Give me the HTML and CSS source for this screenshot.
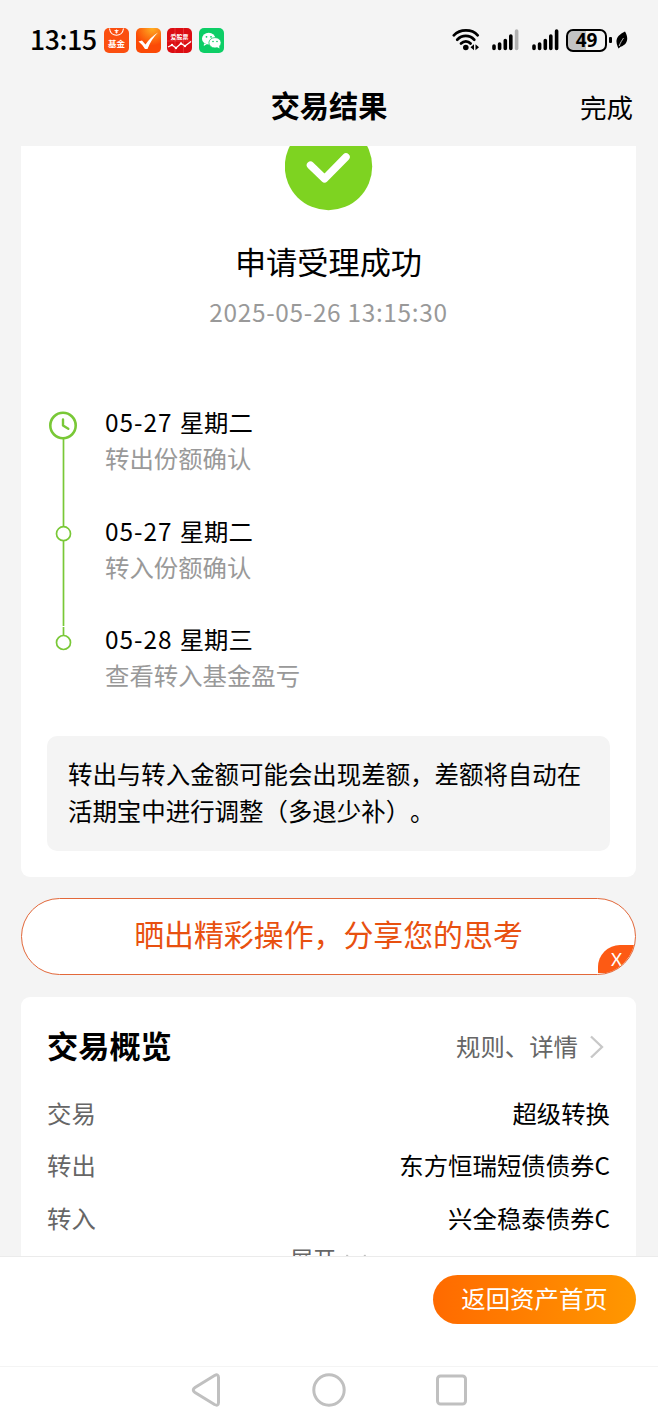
FILE: index.html
```
<!DOCTYPE html>
<html lang="zh-CN">
<head>
  <meta charset="UTF-8">
  <meta name="viewport" content="width=device-width, initial-scale=1.0">
  <title>交易结果</title>
  <link rel="stylesheet" href="styles.css">
</head>
<body>
  <!-- Status bar -->
  <div class="status-bar">
    <span class="clock">13:15</span>
    <div class="app-icons">
      <svg width="25" height="25" viewBox="0 0 25 25">
        <rect width="25" height="25" rx="5" fill="#fb4f10"/>
        <path d="M5.500 0.500C6.500 9.500 18.500 9.500 19.500 0.500" fill="none" stroke="#fff" stroke-width="1.100"/>
        <path d="M10.500 2.500h4M12.500 1.500v4M11 4h3" stroke="#fff" stroke-width="0.900"/>
        <text class="fund-text" x="12.500" y="18.800">基金</text>
      </svg>
      <svg width="25" height="25" viewBox="0 0 25 25">
        <defs>
          <radialGradient id="sun" cx="0.65" cy="0" r="0.7">
            <stop offset="0" stop-color="#ffb022"/>
            <stop offset="1" stop-color="#fb4a06"/>
          </radialGradient>
        </defs>
        <rect width="25" height="25" rx="5" fill="url(#sun)"/>
        <path d="M2.500 13.500L6 12.500L9.500 16.500Q14 9.500 22 4.500Q15 11.500 11.500 21L9 21Q6.500 16.500 2.500 13.500Z" fill="#fff"/>
      </svg>
      <svg width="25" height="25" viewBox="0 0 25 25">
        <rect width="25" height="25" rx="5" fill="#dc0d12"/>
        <path d="M8 0v25M16.500 0v25M0 13h25" stroke="#ef5656" stroke-width="0.500"/>
        <text class="stock-text" x="12.500" y="10.500">爱股票</text>
        <path d="M1 19L5 17L9 20L14 15.500L18 18L24 13.500" fill="none" stroke="#fff" stroke-width="1.300"/>
        <g fill="#fff"><circle cx="5" cy="17" r="1.200"/><circle cx="9" cy="20" r="1.200"/><circle cx="14" cy="15.500" r="1.200"/><circle cx="18" cy="18" r="1.200"/></g>
      </svg>
      <svg width="25" height="25" viewBox="0 0 25 25">
        <rect width="25" height="25" rx="5" fill="#0dce66"/>
        <path d="M5 15.500L4.800 18L8 16Z" fill="#fff"/>
        <ellipse cx="9.700" cy="10.700" rx="6.700" ry="5.900" fill="#fff"/>
        <ellipse cx="16" cy="14.800" rx="6.100" ry="5.200" fill="#fff" stroke="#0dce66" stroke-width="0.800"/>
        <path d="M18 19L20.500 20.500L20 17.500Z" fill="#fff"/>
        <g fill="#0dce66"><circle cx="7.500" cy="8.800" r="0.900"/><circle cx="12" cy="8.800" r="0.900"/><circle cx="14" cy="13.500" r="0.800"/><circle cx="18" cy="13.500" r="0.800"/></g>
      </svg>
    </div>
    <div class="device-icons">
      <svg width="28" height="24" viewBox="0 0 28 24">
        <g fill="none" stroke="#000" stroke-width="2.700" stroke-linecap="round">
          <path d="M1.800 7.300C8 0.700 20 0.700 25.700 7.300"/>
          <path d="M5.200 11.700C10 6.700 17.500 6.700 22.300 11.700"/>
          <path d="M9 15.500C11.800 12.600 16 12.600 18.600 15.500"/>
        </g>
        <circle cx="13.800" cy="19.500" r="2.800"/>
        <path d="M22 16.200v6L18.500 19.200ZM23.500 16.200v6L27 19.200Z"/>
      </svg>
      <svg class="signal" width="27" height="22" viewBox="0 0 27 22">
        <g stroke="#000" stroke-width="3.600" stroke-linecap="round">
          <path d="M2 17v2.500M7.600 15v4.500M13.300 11.500v8M18.800 7v12.500"/>
          <path d="M24.600 2v17.500" stroke="#b2b2b2"/>
        </g>
      </svg>
      <svg class="signal" width="27" height="22" viewBox="0 0 27 22">
        <path d="M2 17v2.500M7.600 15v4.500M13.300 11.500v8M18.800 7v12.500M24.600 2v17.500" stroke="#000" stroke-width="3.600" stroke-linecap="round"/>
      </svg>
      <div class="battery">49</div>
      <span class="battery-tip"></span>
      <svg class="leaf" width="12" height="18" viewBox="0 0 12 18">
        <path d="M9 0.500C12.500 6 12.500 13.500 4.500 15.800L2.500 17.500L1.600 15.500C-1.500 8 2 4 9 0.500Z"/>
        <path d="M3.200 15C4.300 11.500 6 9.500 7.500 7" fill="none" stroke="#f4f4f4" stroke-width="0.800"/>
      </svg>
    </div>
  </div>

  <div class="header">
    <h1>交易结果</h1>
    <a class="done">完成</a>
  </div>

  <div class="content">
    <!-- Result card -->
    <div class="result-card">
      <svg class="success-icon" width="88" height="65" viewBox="0 0 88 65">
        <circle cx="43.500" cy="20.500" r="43.700" fill="#7ed321"/>
        <path d="M26 19.700L40 33.300L61.500 11.500" transform="translate(-0.500 -0.500)" fill="none" stroke="#fff" stroke-width="7.500" stroke-linecap="round" stroke-linejoin="round"/>
      </svg>
      <h2 class="result-title">申请受理成功</h2>
      <div class="result-time">2025-05-26 13:15:30</div>

      <div class="timeline">
        <svg class="timeline-track" width="30" height="242" viewBox="0 0 30 242">
          <g fill="none" stroke="#79c837">
            <path d="M16.500 29v87M16.500 131v85M16.500 217v8" stroke-width="1.700"/>
            <circle cx="16" cy="15.500" r="12.700" stroke-width="2.600"/>
            <path d="M16 9.500v6L21.300 18.800" stroke-width="2.400" stroke-linecap="round" stroke-linejoin="round"/>
            <circle cx="16.500" cy="123.700" r="7" stroke-width="1.700"/>
            <circle cx="16.500" cy="232.500" r="7" stroke-width="1.700"/>
          </g>
        </svg>
        <div class="steps">
          <div class="step">
            <div class="step-date"><span class="num">05-27</span>星期二</div>
            <div class="step-text">转出份额确认</div>
          </div>
          <div class="step">
            <div class="step-date"><span class="num">05-27</span>星期二</div>
            <div class="step-text">转入份额确认</div>
          </div>
          <div class="step">
            <div class="step-date"><span class="num">05-28</span>星期三</div>
            <div class="step-text">查看转入基金盈亏</div>
          </div>
        </div>
      </div>

      <div class="notice">转出与转入金额可能会出现差额，差额将自动在<br>活期宝中进行调整（多退少补）。</div>
    </div>

    <!-- Share banner -->
    <div class="share">
      晒出精彩操作，分享您的思考
      <span class="share-close">X</span>
    </div>

    <!-- Overview -->
    <div class="overview">
      <div class="overview-head">
        <h2>交易概览</h2>
        <div class="detail-link">规则、详情
          <svg width="16" height="24" viewBox="0 0 16 24"><path d="M2 2.500L13 13L2 23.500" fill="none" stroke="#c8c8c8" stroke-width="2.300"/></svg>
        </div>
      </div>
      <div class="row"><span class="label">交易</span><span>超级转换</span></div>
      <div class="row"><span class="label">转出</span><span>东方恒瑞短债债券C</span></div>
      <div class="row"><span class="label">转入</span><span>兴全稳泰债券C</span></div>
      <div class="expand">展开
        <svg width="22" height="12" viewBox="0 0 22 12"><path d="M1.500 1L11 10L20.500 1" fill="none" stroke="#bbb" stroke-width="1.500"/></svg>
      </div>
    </div>
  </div>

  <div class="footer">
    <button class="home-button">返回资产首页</button>
  </div>

  <!-- System navigation -->
  <div class="nav-bar">
    <svg width="34" height="36" viewBox="0 0 34 36"><path d="M24.500 3.500Q28.500 1.500 28.500 5.500V30.500Q28.500 34.500 24.500 32.500L5 20.500Q1.500 18 5 15.500Z"/></svg>
    <svg width="34" height="36" viewBox="0 0 34 36"><circle cx="17" cy="18" r="15.200"/></svg>
    <svg width="34" height="36" viewBox="0 0 34 36"><rect x="3.500" y="4" width="28" height="28" rx="3"/></svg>
  </div>
</body>
</html>
```

FILE: styles.css
```
* {
  box-sizing: border-box;
}

body {
  margin: 0;
  height: 1416px;
  display: flex;
  flex-direction: column;
  overflow: hidden;
  background-color: #f4f4f4;
  color: #000;
  font-family: "Noto Sans CJK SC", sans-serif;
  font-size: 24.4px;
  text-spacing-trim: space-all;
}

h1, h2 {
  margin: 0;
}

svg {
  display: block;
  flex: none;
}

/* Status bar */
.status-bar {
  height: 80px;
  padding: 0 30px 0 30px;
  display: flex;
  align-items: center;
}

.clock {
  width: 74px;
  font-size: 26.5px;
  font-weight: 500;
  line-height: 40px;
  padding-bottom: 2px;
  letter-spacing: -0.3px;
  white-space: nowrap;
}

.app-icons {
  display: flex;
  gap: 6.5px;
}

.fund-text, .stock-text {
  fill: #fff;
  text-anchor: middle;
  font-weight: 700;
}

.fund-text {
  font-size: 8.5px;
}

.stock-text {
  font-size: 6px;
}

.device-icons {
  margin-left: auto;
  display: flex;
  align-items: center;
}

.signal {
  margin-left: 12px;
}

.signal + .signal {
  margin-left: 13px;
}

.battery {
  width: 41px;
  height: 23px;
  margin-left: 7px;
  border: 2px solid #000;
  border-radius: 7px;
  background: linear-gradient(to right, #c3c3c3 50%, #f4f4f4 50%);
  font-family: "Noto Sans", sans-serif;
  font-size: 19px;
  font-weight: 700;
  line-height: 19px;
  text-align: center;
}

.battery-tip {
  width: 3px;
  height: 6px;
  margin-left: 2px;
  border-radius: 1px;
  background: #000;
}

.leaf {
  margin-left: 4px;
}

/* Header */
.header {
  position: relative;
  height: 66px;
  padding-top: 4px;
  text-align: center;
}

.header h1 {
  font-size: 29.2px;
  line-height: 41px;
}

.done {
  position: absolute;
  right: 25px;
  top: 6px;
  font-size: 26.5px;
  line-height: 42px;
}

.content {
  height: 1110px;
  padding: 0 22px 0 21px;
  overflow: hidden;
}

/* Result card */
.result-card {
  height: 731px;
  padding: 0 26px;
  border-radius: 0 0 9px 9px;
  background: #fff;
  text-align: center;
}

.success-icon {
  margin: 0 auto;
}

.result-title {
  margin-top: 27px;
  font-size: 31.2px;
  font-weight: 400;
  line-height: 46px;
}

.result-time {
  margin-top: 10px;
  color: #999;
  letter-spacing: 0.68px;
  line-height: 36px;
}

.timeline {
  margin-top: 74px;
  display: flex;
  text-align: left;
}

.timeline-track {
  margin-top: 6px;
}

.steps {
  padding-left: 28px;
}

.step {
  height: 108.6px;
  line-height: 36.2px;
}

.num {
  margin-right: 7px;
  letter-spacing: 1px;
}

.step-text {
  color: #999;
}

.notice {
  height: 115px;
  margin-top: 6px;
  padding: 19px 20px 0 21px;
  border-radius: 10px;
  background: #f4f4f4;
  font-size: 24.45px;
  line-height: 37px;
  text-align: left;
  white-space: nowrap;
}

/* Share banner */
.share {
  position: relative;
  height: 77px;
  margin-top: 21px;
  border: 1px solid #e2683a;
  border-radius: 39px;
  background: #fff;
  color: #e8500f;
  font-size: 29.9px;
  line-height: 69px;
  text-align: center;
  overflow: hidden;
}

.share-close {
  position: absolute;
  right: 0;
  bottom: 1px;
  width: 37px;
  height: 28px;
  border-top-left-radius: 22px;
  background: #fd5a14;
  color: #fff;
  font-family: Lato, sans-serif;
  font-size: 17px;
  line-height: 29px;
}

/* Overview */
.overview {
  height: 300px;
  margin-top: 22px;
  padding: 24px 26px 0;
  border-radius: 9px;
  background: #fff;
}

.overview-head {
  display: flex;
  justify-content: space-between;
  height: 67px;
  line-height: 50px;
}

.overview-head h2 {
  font-size: 31.2px;
  line-height: 48px;
}

.detail-link {
  height: 50px;
  padding-right: 5px;
  display: flex;
  align-items: center;
  gap: 11px;
  color: #666;
}

.row {
  display: flex;
  justify-content: space-between;
  height: 52.3px;
  line-height: 50px;
}

.label {
  color: #666;
}

.expand {
  display: flex;
  justify-content: center;
  align-items: center;
  gap: 9px;
  height: 30px;
  margin-top: -2px;
  color: #666;
  font-size: 23px;
  line-height: 30px;
}

.expand svg {
  margin-top: 4px;
}

/* Footer */
.footer {
  height: 110px;
  padding: 18px 22px 0;
  border-top: 1px solid #ebebeb;
  background: #fff;
}

.home-button {
  display: block;
  width: 203px;
  height: 49px;
  margin-left: auto;
  padding: 0 0 3px;
  border: none;
  border-radius: 25px;
  background: linear-gradient(to right, #ff6a00, #ff9800);
  color: #fff;
  font-family: inherit;
  font-size: 24.4px;
  line-height: 46px;
}

.nav-bar {
  height: 50px;
  padding-bottom: 3px;
  display: flex;
  justify-content: center;
  align-items: center;
  gap: 88px;
  border-top: 1px solid #f4f4f4;
  background: #fff;
}

.nav-bar svg {
  fill: none;
  stroke: #c0c0c0;
  stroke-width: 3;
}
```
